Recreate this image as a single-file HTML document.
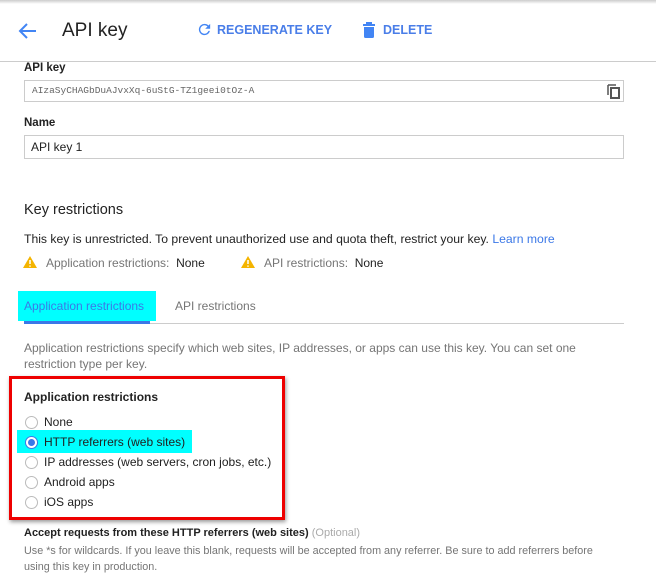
<!DOCTYPE html>
<html><head><meta charset="utf-8"><style>
*{margin:0;padding:0;box-sizing:border-box}
body{width:656px;height:575px;background:#fff;font-family:"Liberation Sans",Arial,sans-serif;color:#212121;position:relative;overflow:hidden}
.a{position:absolute;white-space:nowrap}
.lbl{font-size:11.5px;font-weight:bold;color:#222}
.inp{position:absolute;left:24px;width:600px;border:1px solid #ccc}
.g{color:#757575}
.radio{position:absolute;left:25px;width:13px;height:13px;border:1px solid #bbb;border-radius:50%;background:#fff}
.rt{position:absolute;left:44px;font-size:12px;color:#212121}
</style></head><body>
<div class="a" style="left:0;top:0;width:656px;height:4px;background:linear-gradient(#ccc,#fff)"></div>
<svg class="a" style="left:18px;top:22px" width="20" height="18" viewBox="0 0 20 18"><path d="M18 9H3M9 2L2 9l7 7" stroke="#4285f4" stroke-width="2" fill="none"/></svg>
<div class="a" style="left:62px;top:20px;font-size:19px;color:#222">API key</div>
<svg class="a" style="left:196px;top:21px" width="17" height="17" viewBox="0 0 24 24"><path d="M17.65 6.35A7.96 7.96 0 0 0 12 4a8 8 0 1 0 7.73 10h-2.08A6 6 0 1 1 12 6c1.66 0 3.14.69 4.22 1.78L13 11h7V4l-2.35 2.35z" fill="#4285f4"/></svg>
<div class="a" style="left:217px;top:23px;font-size:12.5px;font-weight:bold;color:#4a7ee8">REGENERATE KEY</div>
<svg class="a" style="left:362px;top:22px" width="14" height="16" viewBox="0 0 14 16"><path d="M1 2h12v2H1zM4 0h6v2H4zM2 5h10v9.5a1.5 1.5 0 0 1-1.5 1.5h-7A1.5 1.5 0 0 1 2 14.5z" fill="#4285f4"/></svg>
<div class="a" style="left:383px;top:23px;font-size:12.5px;font-weight:bold;color:#4a7ee8">DELETE</div>
<div class="a" style="left:0;top:61px;width:656px;height:1px;background:#ccc"></div>
<div class="a lbl" style="left:24px;top:62px">API key</div>
<div class="inp" style="top:80px;height:22px;background:#fff"></div>
<div class="a" style="left:32px;top:85px;font-family:'Liberation Mono',monospace;font-size:9.5px;color:#666">AIzaSyCHAGbDuAJvxXq-6uStG-TZ1geei0tOz-A</div>
<svg class="a" style="left:607px;top:84px" width="14" height="15" viewBox="0 0 14 15"><path d="M1 1h8M1 1v10" stroke="#555" stroke-width="1.5" fill="none"/><rect x="4" y="4" width="8" height="10" stroke="#555" stroke-width="2" fill="none"/></svg>
<div class="a lbl" style="left:24px;top:117px">Name</div>
<div class="inp" style="top:135px;height:24px"></div>
<div class="a" style="left:31px;top:140px;font-size:12px">API key 1</div>
<div class="a" style="left:24px;top:202px;font-size:14.5px;color:#222">Key restrictions</div>
<div class="a" style="left:24px;top:232px;font-size:12.2px;color:#222">This key is unrestricted. To prevent unauthorized use and quota theft, restrict your key. <span style="color:#3b78e7">Learn more</span></div>
<svg class="a" style="left:23px;top:256px" width="14" height="12" viewBox="0 0 14 12"><path d="M7 0L14 12H0z" fill="#f4b400"/><path d="M7 4v4M7 9.5v1.2" stroke="#fff" stroke-width="1.5"/></svg>
<div class="a g" style="left:46px;top:256px;font-size:12px">Application restrictions: &nbsp;<span style="color:#222">None</span></div>
<svg class="a" style="left:241px;top:256px" width="14" height="12" viewBox="0 0 14 12"><path d="M7 0L14 12H0z" fill="#f4b400"/><path d="M7 4v4M7 9.5v1.2" stroke="#fff" stroke-width="1.5"/></svg>
<div class="a g" style="left:264px;top:256px;font-size:12px">API restrictions: &nbsp;<span style="color:#222">None</span></div>
<div class="a" style="left:18px;top:291px;width:138px;height:30px;background:#00ffff"></div>
<div class="a" style="left:24px;top:299px;font-size:12px;color:#3b78e7">Application restrictions</div>
<div class="a g" style="left:175px;top:299px;font-size:12px">API restrictions</div>
<div class="a" style="left:24px;top:323px;width:600px;height:1px;background:#ccc"></div>
<div class="a" style="left:24px;top:321px;width:126px;height:3px;background:#3b78e7"></div>
<div class="a g" style="left:24px;top:340px;font-size:12px;line-height:16px;white-space:normal;width:600px">Application restrictions specify which web sites, IP addresses, or apps can use this key. You can set one restriction type per key.</div>
<div class="a" style="left:9px;top:376px;width:276px;height:144px;border:3px solid #e00;box-shadow:1px 2px 4px rgba(0,0,0,.4)"></div>
<div class="a lbl" style="left:24px;top:390px;font-size:12px">Application restrictions</div>
<div class="a" style="left:17px;top:430px;width:175px;height:23px;background:#00ffff"></div>
<div class="radio" style="top:416px"></div><div class="rt" style="top:415px">None</div>
<div class="radio" style="top:436px;border:1.5px solid #3b78e7"><div style="position:absolute;left:1.5px;top:1.5px;width:7px;height:7px;border-radius:50%;background:#3b78e7"></div></div><div class="rt" style="top:435px">HTTP referrers (web sites)</div>
<div class="radio" style="top:456px"></div><div class="rt" style="top:455px">IP addresses (web servers, cron jobs, etc.)</div>
<div class="radio" style="top:476px"></div><div class="rt" style="top:475px">Android apps</div>
<div class="radio" style="top:496px"></div><div class="rt" style="top:495px">iOS apps</div>
<div class="a lbl" style="left:24px;top:527px;font-size:11px">Accept requests from these HTTP referrers (web sites) <span style="font-weight:normal;color:#aaa">(Optional)</span></div>
<div class="a g" style="left:24px;top:543px;font-size:10.8px;line-height:16px;white-space:normal;width:590px">Use *s for wildcards. If you leave this blank, requests will be accepted from any referrer. Be sure to add referrers before using this key in production.</div>
</body></html>
